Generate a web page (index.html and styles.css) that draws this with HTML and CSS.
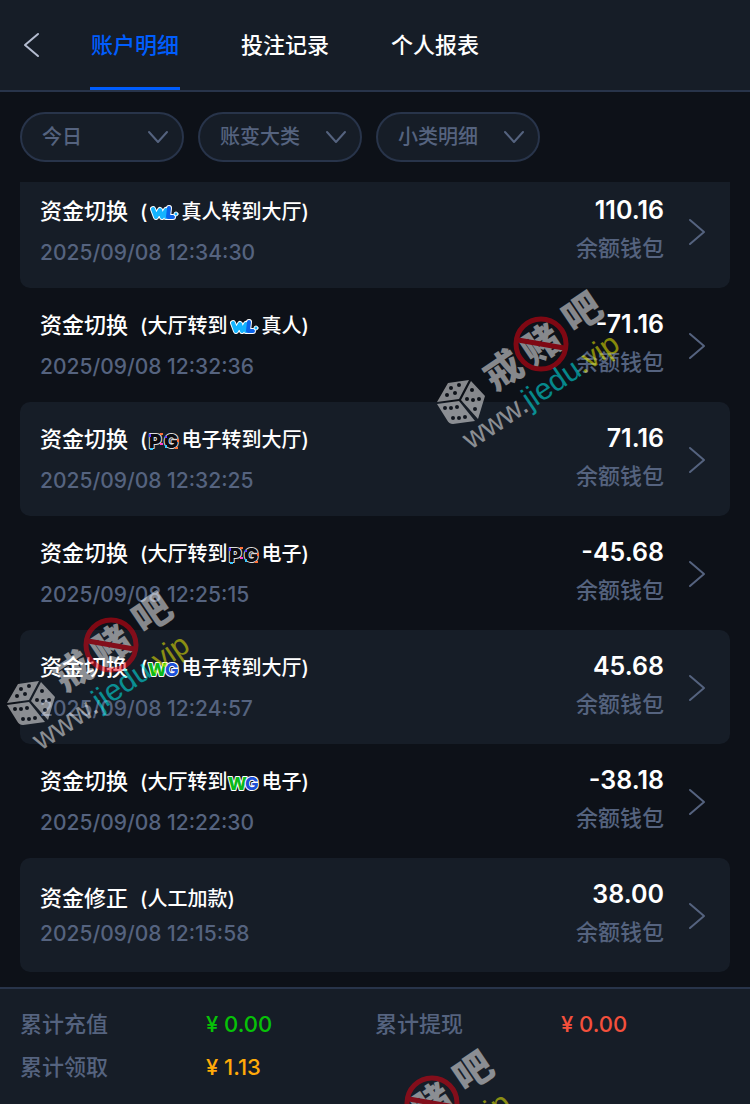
FILE: index.html
```html
<!DOCTYPE html>
<html lang="zh-CN">
<head>
    <meta charset="utf-8">
    <title>账户明细</title>
    <meta name="viewport" content="width=device-width, initial-scale=1">
    <link rel="stylesheet" href="styles.css">
</head>
<body>

<!-- shared icons -->
<svg class="sprite" aria-hidden="true">
    <symbol id="down" viewBox="0 0 22 14"><path d="M2 2l9 10 9-10"/></symbol>
    <symbol id="right" viewBox="0 0 18 28"><path d="M2 2l14 12L2 26"/></symbol>
    <symbol id="wm" viewBox="0 0 34 20">
        <path d="M6 6l3 8 4-7 2 7 4-7v7M22 5l-1 9h5" stroke="#fff" stroke-width="6"/>
        <path d="M6 6l3 8 4-7 2 7 4-7v7" stroke="#14b4ff" stroke-width="4"/>
        <path d="M22 5l-1 9h5" stroke="#0a63ea" stroke-width="4"/>
        <circle cx="29" cy="11" r="2" fill="#14b4ff" stroke="#fff" stroke-width="1"/>
    </symbol>
</svg>

<header class="header">
    <button class="back" aria-label="返回">
        <svg width="18" height="26" viewBox="0 0 18 26"><path d="M15 2L2 13l13 11"/></svg>
    </button>
    <nav class="tabs">
        <a class="tab active" href="#">账户明细</a>
        <a class="tab" href="#">投注记录</a>
        <a class="tab" href="#">个人报表</a>
    </nav>
</header>

<div class="filters">
    <div class="filter">
        <select aria-label="日期"><option>今日</option></select>
        <svg class="down"><use href="#down"/></svg>
    </div>
    <div class="filter">
        <select aria-label="账变大类"><option>账变大类</option></select>
        <svg class="down"><use href="#down"/></svg>
    </div>
    <div class="filter">
        <select aria-label="小类明细"><option>小类明细</option></select>
        <svg class="down"><use href="#down"/></svg>
    </div>
</div>

<main class="list">
    <a class="row" href="#">
        <div class="info">
            <div class="title">资金切换<span class="note">(<svg class="logo"><use href="#wm"/></svg>真人转到大厅)</span></div>
            <time class="date">2025/09/08 12:34:30</time>
        </div>
        <div class="money">
            <div class="amount">110.16</div>
            <div class="wallet">余额钱包</div>
        </div>
        <svg class="right"><use href="#right"/></svg>
    </a>
    <a class="row" href="#">
        <div class="info">
            <div class="title">资金切换<span class="note">(大厅转到<svg class="logo"><use href="#wm"/></svg>真人)</span></div>
            <time class="date">2025/09/08 12:32:36</time>
        </div>
        <div class="money">
            <div class="amount">-71.16</div>
            <div class="wallet">余额钱包</div>
        </div>
        <svg class="right"><use href="#right"/></svg>
    </a>
    <a class="row" href="#">
        <div class="info">
            <div class="title">资金切换<span class="note">(<svg class="logo">
                <g id="pg">
                    <text class="pg-text" x="2" y="17">P</text>
                    <text class="pg-text" x="17" y="17">G</text>
                    <path d="M2 3h2v3H2zM18 5h2v2h-2z" fill="#6a3cff"/>
                    <path d="M13 2h3v2h-3zM30 8h2v3h-2zM28 16h3v2h-3z" fill="#ff7038"/>
                    <path d="M3 17h3v2H3zM18 14h2v3h-2z" fill="#37c8ff"/>
                    <path d="M13 12h3v2h-3z" fill="#ff42c8"/>
                </g>
            </svg>电子转到大厅)</span></div>
            <time class="date">2025/09/08 12:32:25</time>
        </div>
        <div class="money">
            <div class="amount">71.16</div>
            <div class="wallet">余额钱包</div>
        </div>
        <svg class="right"><use href="#right"/></svg>
    </a>
    <a class="row" href="#">
        <div class="info">
            <div class="title">资金切换<span class="note">(大厅转到<svg class="logo"><use href="#pg"/></svg>电子)</span></div>
            <time class="date">2025/09/08 12:25:15</time>
        </div>
        <div class="money">
            <div class="amount">-45.68</div>
            <div class="wallet">余额钱包</div>
        </div>
        <svg class="right"><use href="#right"/></svg>
    </a>
    <a class="row" href="#">
        <div class="info">
            <div class="title">资金切换<span class="note">(<svg class="logo">
                <g id="wg">
                    <text class="wg-text" x="1" y="17" fill="#0bb81b">W</text>
                    <text class="wg-text" x="18" y="17" fill="#1d50d8">G</text>
                </g>
            </svg>电子转到大厅)</span></div>
            <time class="date">2025/09/08 12:24:57</time>
        </div>
        <div class="money">
            <div class="amount">45.68</div>
            <div class="wallet">余额钱包</div>
        </div>
        <svg class="right"><use href="#right"/></svg>
    </a>
    <a class="row" href="#">
        <div class="info">
            <div class="title">资金切换<span class="note">(大厅转到<svg class="logo"><use href="#wg"/></svg>电子)</span></div>
            <time class="date">2025/09/08 12:22:30</time>
        </div>
        <div class="money">
            <div class="amount">-38.18</div>
            <div class="wallet">余额钱包</div>
        </div>
        <svg class="right"><use href="#right"/></svg>
    </a>
    <a class="row" href="#">
        <div class="info compact">
            <div class="title">资金修正<span class="note">(人工加款)</span></div>
            <time class="date">2025/09/08 12:15:58</time>
        </div>
        <div class="money">
            <div class="amount">38.00</div>
            <div class="wallet">余额钱包</div>
        </div>
        <svg class="right"><use href="#right"/></svg>
    </a>
</main>

<footer class="totals">
    <div class="total"><span>累计充值</span><span class="green">¥ 0.00</span></div>
    <div class="total"><span>累计提现</span><span class="red">¥ 0.00</span></div>
    <div class="total"><span>累计领取</span><span class="orange">¥ 1.13</span></div>
</footer>

<div class="stamps" aria-hidden="true">
    <svg class="stamp stamp-top">
        <g id="stamp">
            <!-- dice -->
            <path d="M2 117L13 98l21-3-10 19zM36 96l14 15-7 23-17-19zM2 119l22-3 16 20-22 3q-4 0-6-4z" fill="#fff"/>
            <g fill="#0d1118">
                <circle cx="16" cy="103" r="2"/><circle cx="24" cy="100" r="2"/>
                <circle cx="12" cy="110" r="2"/><circle cx="20" cy="108" r="2"/>
                <circle cx="37" cy="105" r="2"/><circle cx="32" cy="114" r="2"/><circle cx="38" cy="115" r="2"/>
                <circle cx="44" cy="114" r="2"/><circle cx="40" cy="124" r="2"/>
                <circle cx="10" cy="123" r="2"/><circle cx="16" cy="123" r="2"/><circle cx="22" cy="122" r="2"/>
                <circle cx="18" cy="133" r="2"/><circle cx="24" cy="133" r="2"/><circle cx="30" cy="132" r="2"/>
            </g>
            <text class="stamp-name" transform="translate(68 85) rotate(-34)" dy="14">戒</text>
            <text class="stamp-name" transform="translate(106 59) rotate(-34)" dy="14">赌</text>
            <text class="stamp-name" transform="translate(147 27) rotate(-34)" dy="14">吧</text>
            <g stroke="#f00010" stroke-width="5"><circle cx="106" cy="59" r="25"/><path d="M83 55l46 8"/></g>
            <text class="stamp-url" transform="translate(36 165) rotate(-34)">www.<tspan fill="#00ffff">jiedu</tspan><tspan fill="#ffff00">.vip</tspan></text>
        </g>
    </svg>
    <svg class="stamp stamp-left"><use href="#stamp"/></svg>
    <svg class="stamp stamp-bottom"><use href="#stamp"/></svg>
</div>

</body>
</html>
```
FILE: styles.css
```css
* { box-sizing: border-box; }
body { position: relative; display: flex; flex-direction: column; min-height: 100vh; margin: 0; background: #0d1118; color: #fff; font-family: Inter, "Noto Sans CJK SC", sans-serif; font-size: 22px; font-weight: 500; }
a { color: inherit; text-decoration: none; }
svg { fill: none; stroke-linecap: round; stroke-linejoin: round; }
.sprite { position: absolute; width: 0; height: 0; }

.header { display: flex; height: 92px; padding-left: 20px; background: #161d27; border-bottom: 2px solid #28344a; }
.back { width: 70px; padding: 0 0 0 3px; background: none; border: none; text-align: left; cursor: pointer; }
.back svg { display: block; stroke: #b4bcd0; stroke-width: 2; }
.tabs { display: flex; gap: 60px; }
.tab { width: 90px; line-height: 90px; text-align: center; white-space: nowrap; }
.tab.active { color: #005dfe; box-shadow: inset 0 -3px #005dfe; }

.filters { display: flex; gap: 14px; padding: 20px; }
.filter { position: relative; }
.filter select { width: 164px; height: 50px; padding: 0 20px; appearance: none; background: #161d27; border: 2px solid #28344a; border-radius: 25px; color: #55637f; font: inherit; font-size: 20px; }
.down { position: absolute; top: 18px; right: 15px; width: 22px; height: 14px; stroke: #55637f; stroke-width: 2; pointer-events: none; }

.list { padding: 0 20px 15px; }
.row { display: flex; align-items: center; min-height: 114px; padding: 21px 23px 19px 20px; border-radius: 10px; }
.row:nth-child(odd) { background: #161d27; }
.row:first-child { min-height: 106px; padding-top: 13px; border-radius: 0 0 10px 10px; }
.info { flex: 1; line-height: 32px; }
.title { height: 32px; margin-bottom: 10px; white-space: nowrap; }
.compact .title { margin-bottom: 4px; }
.note { margin-left: 12px; font-size: 20px; }
.logo { width: 34px; height: 20px; vertical-align: -4px; }
.pg-text { fill: #0b0b10; stroke: #ddd; stroke-width: 2px; paint-order: stroke; font-size: 19px; font-weight: 900; }
.wg-text { stroke: #fff; stroke-width: 2px; paint-order: stroke; font-size: 18px; font-weight: 800; }
.date { display: block; color: #55637f; font-size: 21px; }
.money { align-self: flex-start; margin-right: 24px; line-height: 30px; text-align: right; }
.amount { margin-bottom: 8px; font-size: 25px; font-weight: 600; }
.wallet { color: #55637f; }
.right { width: 18px; height: 28px; margin-right: 1px; stroke: #55637f; stroke-width: 2; }

.totals { flex: 1; display: grid; grid-template-columns: 1fr 1fr; align-content: start; row-gap: 13px; padding: 20px; border-top: 2px solid #28344a; background: #161d27; color: #55637f; line-height: 30px; }
.total { display: grid; grid-template-columns: 186px 1fr; }
.green { color: #07c207; }
.red { color: #f4503c; }
.orange { color: #ffaa09; }

/* tilted site stamps over the page */
.stamps { position: absolute; inset: 0; overflow: hidden; pointer-events: none; }
.stamp { position: absolute; width: 200px; height: 170px; opacity: .5; }
.stamp-top { left: 435px; top: 285px; }
.stamp-left { left: 5px; top: 586px; }
.stamp-bottom { left: 326px; top: 1044px; }
.stamp-name { fill: #fff; font-family: "Noto Sans CJK SC", sans-serif; font-size: 38px; font-weight: 900; text-anchor: middle; }
.stamp-url { fill: #fff; font-family: "Liberation Sans", sans-serif; font-size: 30px; }
```
